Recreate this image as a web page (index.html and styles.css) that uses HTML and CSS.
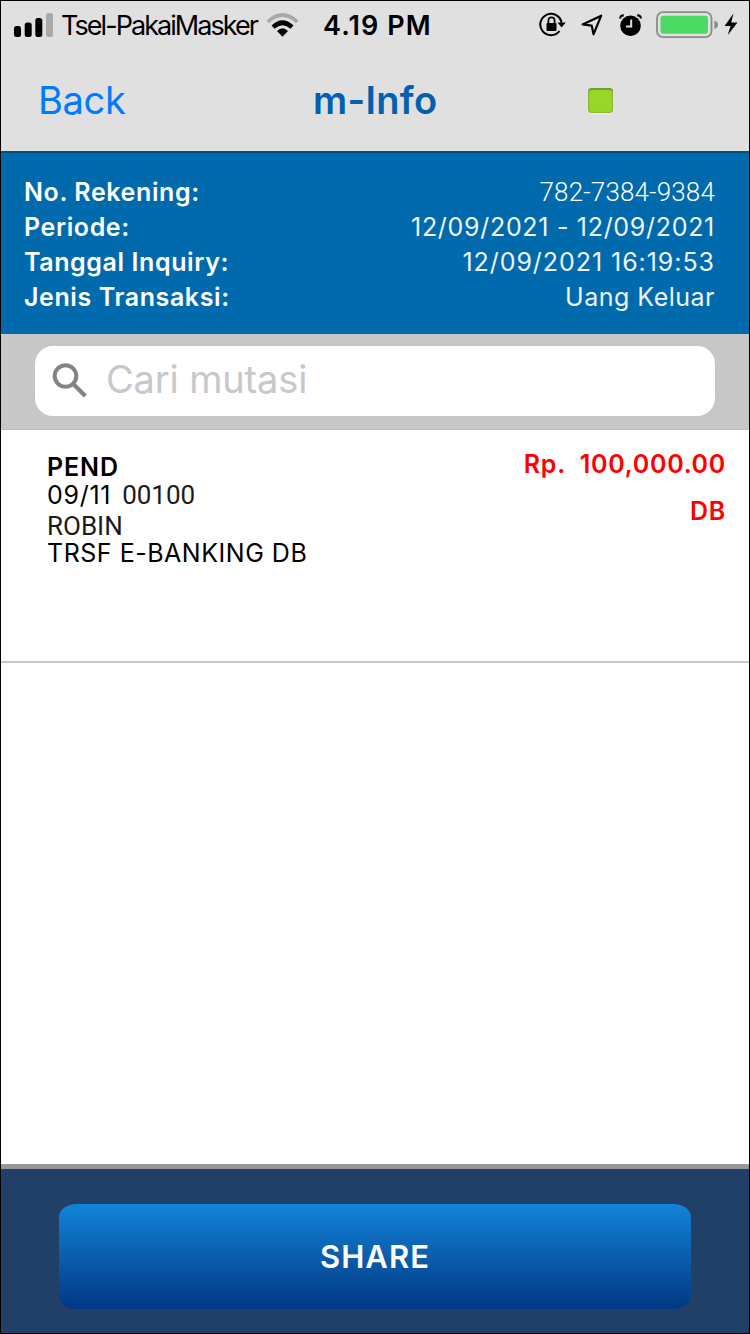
FILE: index.html
```html
<!DOCTYPE html>
<html lang="id">
<head>
<meta charset="utf-8">
<title>m-Info</title>
<link rel="stylesheet" href="styles.css">
</head>
<body>
<div class="screen">
  <div class="status-bar">
    <svg class="signal" width="40" height="26" viewBox="0 0 40 26">
      <rect x="0" y="14" width="7" height="11" rx="2.5"/>
      <rect x="10.7" y="10.5" width="7" height="14.500" rx="2.500"/>
      <rect x="21.300" y="6" width="7" height="19" rx="2.500"/>
      <rect x="32" y="1" width="7" height="24" rx="2.500" fill="#a9a9a9"/>
    </svg>
    <span class="carrier">Tsel-PakaiMasker</span>
    <svg class="wifi" width="34" height="26" viewBox="0 0 34 26">
      <path d="M0.500 8.400Q16.500-6.200 32.500 8.400L30 11.200Q16.500-1.200 3 11.200Z" fill="#a9a9a9"/>
      <path d="M5.500 13.600Q16.500 3 27.500 13.600L24.500 16.800Q16.500 9.600 8.500 16.800Z"/>
      <path d="M11 19Q16.500 13.600 22 19L16.500 24.700Z"/>
    </svg>
    <span class="clock">4.19 PM</span>
    <svg class="lock" width="28" height="26" viewBox="0 0 28 26">
      <path d="M20.500 19A10.700 10.700 0 1 1 22.500 10.500" fill="none" stroke="#000" stroke-width="2"/>
      <path d="M18.500 10.500H26.700L22.600 15.500Z"/>
      <rect x="7.500" y="11" width="10" height="8" rx="1"/>
      <path d="M9.400 11.500V8.500a3.100 3.100 0 0 1 6.200 0V11.500" fill="none" stroke="#000" stroke-width="1.700"/>
    </svg>
    <svg class="location" width="22" height="22" viewBox="0 0 22 22">
      <path d="M1.600 10.500L20.200 1.700L12.500 20.300L10.700 11.600Z" fill="none" stroke="#000" stroke-width="2.200" stroke-linejoin="round"/>
    </svg>
    <svg class="alarm" width="24" height="23" viewBox="0 0 24 23">
      <circle cx="11.500" cy="11.700" r="10.300"/>
      <path d="M1.200 4.500Q1.200 1.200 4.800 1.300M21.800 4.500Q21.800 1.200 18.200 1.300" fill="none" stroke="#000" stroke-width="2.200"/>
      <path d="M12.200 5.500V12.600H7" fill="none" stroke="#e0e0e0" stroke-width="2"/>
    </svg>
    <svg class="battery" width="84" height="28" viewBox="0 0 84 28">
      <rect x="1" y="1.200" width="54.500" height="25" rx="6" fill="none" stroke="#8b8b8b" stroke-width="1.800"/>
      <rect x="4.500" y="4.700" width="47.500" height="18" rx="3" fill="#4cd964"/>
      <path d="M58.300 9.500Q62 10.500 62 13.700T58.300 18Z" fill="#8b8b8b"/>
      <path d="M77.500 2.500L68.500 15H74.500L71.800 24L81.500 11.500H75.200Z"/>
    </svg>
  </div>

  <header class="nav-bar">
    <a class="back">Back</a>
    <h1 class="title">m-Info</h1>
    <span class="indicator"></span>
  </header>

  <dl class="summary">
    <div class="summary-row"><dt>No. Rekening:</dt><dd class="account">782-7384-9384</dd></div>
    <div class="summary-row"><dt>Periode:</dt><dd class="period">12/09/2021 - 12/09/2021</dd></div>
    <div class="summary-row"><dt>Tanggal Inquiry:</dt><dd class="inquiry">12/09/2021 16:19:53</dd></div>
    <div class="summary-row"><dt>Jenis Transaksi:</dt><dd class="kind">Uang Keluar</dd></div>
  </dl>

  <div class="search">
    <div class="search-field">
      <svg class="search-icon" width="36" height="36" viewBox="0 0 36 36">
        <circle cx="13.500" cy="13" r="10.800" fill="none" stroke="#848484" stroke-width="4"/>
        <path d="M20.500 20.300L33.300 33" stroke="#848484" stroke-width="4.300"/>
      </svg>
      <span class="placeholder">Cari mutasi</span>
    </div>
  </div>

  <main class="list">
    <article class="entry">
      <div class="details">
        <div class="state">PEND</div>
        <div class="date"><span>09/11</span><span class="code">00100</span></div>
        <div class="name">ROBIN</div>
        <div class="description">TRSF E-BANKING DB</div>
      </div>
      <div class="amount">
        <div class="value">Rp.&nbsp; 100,000.00</div>
        <div class="type">DB</div>
      </div>
    </article>
  </main>

  <footer class="actions">
    <button class="share">SHARE</button>
  </footer>
</div>
</body>
</html>
```
FILE: styles.css
```css
* { box-sizing: border-box; }

body {
  margin: 0;
  font-family: Inter, "Liberation Sans", sans-serif;
  color: #000;
}

.screen {
  width: 750px;
  height: 1334px;
  border: 1px solid #000;
  background: #fff;
  display: flex;
  flex-direction: column;
  overflow: hidden;
}

svg { display: block; flex: none; }

.status-bar {
  height: 48px;
  flex: none;
  padding-left: 13px;
  background: #e0e0e0;
  display: flex;
  align-items: center;
  white-space: nowrap;
}

.carrier,
.clock {
  font-size: 27px;
  line-height: 34px;
  padding-top: 1px;
}

.carrier {
  width: 196px;
  margin-left: 7px;
  letter-spacing: -1.95px;
}

.wifi { margin-left: 9px; }

.clock {
  width: 113px;
  margin-left: 23px;
  font-weight: 600;
  letter-spacing: 1.1px;
}

.lock { margin-left: 103px; }
.location { margin-left: 14px; }
.alarm { margin-left: 16px; }
.battery { margin-left: 13px; }

.nav-bar {
  height: 102px;
  flex: none;
  padding: 0 135px 0 37px;
  background: #e0e0e0;
  display: grid;
  grid-template-columns: 275px 1fr 26px;
  align-items: center;
  font-size: 38px;
  line-height: 46px;
}

.back,
.title { padding-bottom: 1px; }

.back { color: #007aff; letter-spacing: -0.3px; }

.title {
  margin: 0;
  font-size: 38px;
  font-weight: 600;
  letter-spacing: 0.3px;
  color: #0260ae;
}

.indicator {
  width: 25px;
  height: 25px;
  border-radius: 4px;
  background: #97d729;
  box-shadow: inset 0 2px 1px #759f2e, inset 0 0 1px 1px #87b92f, 0 1px 1px #eee;
}

.summary {
  height: 183px;
  flex: none;
  margin: 0;
  padding: 22px 34px 0 23px;
  border-top: 2px solid #00517f;
  background: #006aac;
  color: #fff;
  font-size: 25px;
  line-height: 35px;
  white-space: nowrap;
}

.summary-row { display: flex; justify-content: space-between; height: 35px; }
.summary dt { font-weight: 600; letter-spacing: 0.6px; }
.summary dd { margin: 0; color: #eef4f9; }
.summary .account {
  font: 300 26px/35px Roboto, sans-serif;
  letter-spacing: 0.15px;
  color: #fff;
}
.period { letter-spacing: 0.7px; }
.inquiry { letter-spacing: 0.95px; }
.kind { letter-spacing: 0.5px; }

.search {
  height: 96px;
  flex: none;
  padding: 12px 34px 13px;
  border-bottom: 1px solid #bbb;
  background: #c7c7c7;
}

.search-field {
  height: 70px;
  border-radius: 18px;
  background: #fff;
  display: flex;
  align-items: center;
  padding-left: 17px;
}

.placeholder {
  margin-left: 18px;
  padding-bottom: 4px;
  font-size: 38px;
  line-height: 46px;
  letter-spacing: -0.15px;
  color: #c7c7cc;
}

.list { flex: 1; }

.entry {
  height: 233px;
  padding: 17px 23px 0 46px;
  border-bottom: 2px solid #c8c7cc;
  display: flex;
  justify-content: space-between;
  font-size: 25px;
  white-space: nowrap;
}

.details { padding-top: 6px; line-height: 28px; }
.state { font-weight: 600; height: 28px; letter-spacing: 0.9px; }
.date { display: flex; gap: 11px; height: 31px; letter-spacing: 0.7px; }
.code, .name { font-family: Roboto, sans-serif; font-size: 26px; letter-spacing: 0; color: #1b1b1b; }
.name { height: 28px; }
.description { height: 28px; line-height: 27px; letter-spacing: 0.52px; }

.amount {
  color: #f00;
  font-weight: 600;
  text-align: right;
  letter-spacing: 0.7px;
}

.value { height: 47px; line-height: 35px; }
.type { line-height: 35px; }

.actions {
  height: 169px;
  flex: none;
  border-top: 5px solid #989898;
  background: #204068;
  padding: 35px 58px 0;
}

.share {
  display: block;
  width: 632px;
  height: 105px;
  padding: 0;
  border: 0;
  border-radius: 18px / 13px;
  background: linear-gradient(#1284da, #0a5caa 52%, #003884);
  color: #fff;
  font: 600 31px/105px Inter, "Liberation Sans", sans-serif;
  letter-spacing: 1px;
}
```
